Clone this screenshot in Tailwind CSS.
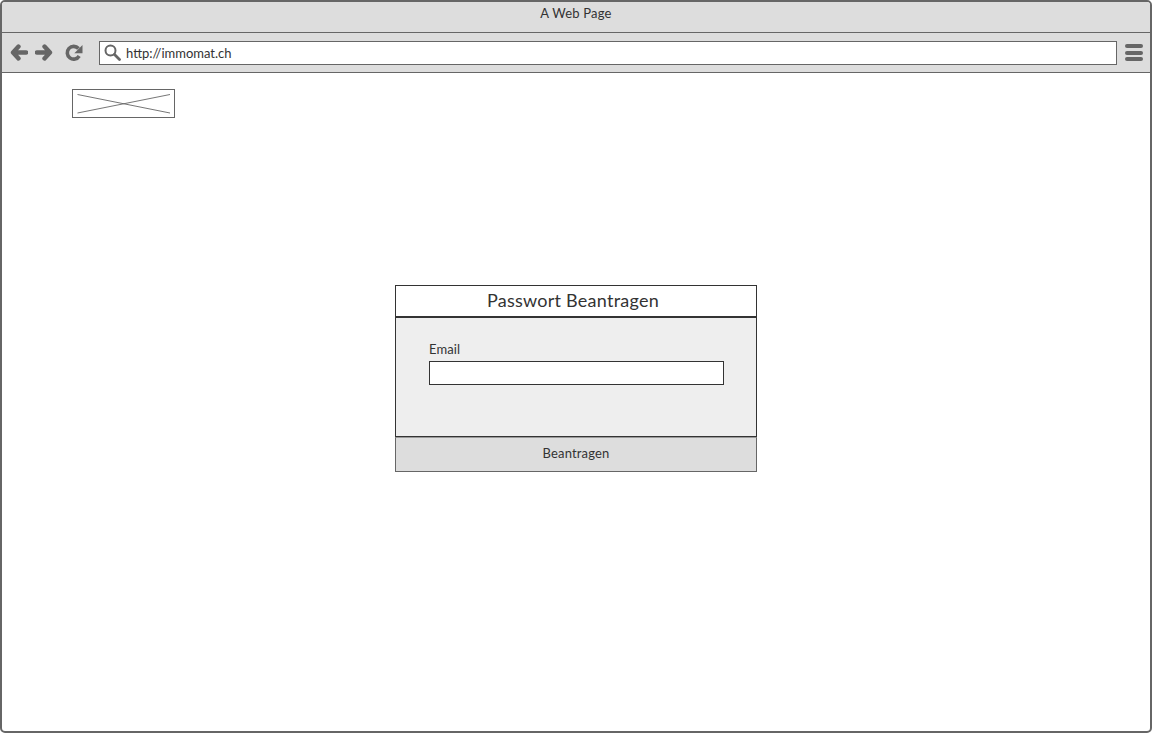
<!doctype html>
<html><head><meta charset="utf-8"><script src="https://cdn.jsdelivr.net/npm/@tailwindcss/browser@4"></script></head>
<body class="bg-white">
<div class="w-[1152px] h-[733px] overflow-hidden bg-white border-2 border-[#666666] rounded-[5px] flex flex-col font-['Lato','Noto_Sans',sans-serif] text-[#333333]">
  <header class="h-[30px] shrink-0 bg-[#dddddd] border-b border-[#666666] -mb-px box-content flex justify-center">
    <span class="text-[13px] leading-[23px] tracking-[0.2px]">A Web Page</span>
  </header>
  <nav class="h-[40px] mt-px shrink-0 bg-[#dddddd] border-b border-[#666666] flex items-center pl-[8px] pr-[7px]">
    <svg class="w-[18px] h-[17px] mr-[7px]" viewBox="0 0 18 17"><path d="M8.5 2.5 L3 8.5 L8.5 14.5 M4 8.5 H16" fill="none" stroke="#666666" stroke-width="4.4" stroke-linecap="round" stroke-linejoin="round"/></svg>
    <svg class="w-[18px] h-[17px] mr-[12px]" viewBox="0 0 18 17"><path d="M9.5 2.5 L15 8.5 L9.5 14.5 M14 8.5 H2" fill="none" stroke="#666666" stroke-width="4.4" stroke-linecap="round" stroke-linejoin="round"/></svg>
    <svg class="w-[18px] h-[18px] mr-[16px]" viewBox="0 0 18 18"><path d="M14.2 12 A6.4 6.4 0 1 1 13.5 4.5" fill="none" stroke="#666666" stroke-width="3.6"/><path d="M17.5 1 V9.2 H9.3 Z" fill="#666666"/></svg>
    <div class="w-[1018px] h-[24px] mt-px bg-white border border-[#666666] flex items-center pl-[4px]">
      <svg class="w-[17px] h-[17px] mr-[5px] -mt-[2px]" viewBox="0 0 17 17"><circle cx="6.5" cy="6.5" r="5" fill="none" stroke="#666666" stroke-width="2"/><path d="M10.5 10.5 L15.5 15.5" stroke="#666666" stroke-width="2.8" stroke-linecap="round"/></svg>
      <span class="text-[13px] leading-[20px]">http://immomat.ch</span>
    </div>
    <div class="ml-[8px] w-[18px] flex flex-col gap-[2.5px]">
      <div class="h-[4px] rounded-full bg-[#666666]"></div>
      <div class="h-[4px] rounded-full bg-[#666666]"></div>
      <div class="h-[4px] rounded-full bg-[#666666]"></div>
    </div>
  </nav>
  <main class="flex-1 flex flex-col">
    <div class="ml-[70px] mt-[16px] w-[103px] h-[29px] border border-[#666666]">
      <svg class="w-full h-full" viewBox="0 0 101 27"><path d="M4.5 4.5 L97 23 M4.5 23 L97 4.5" stroke="#666666" stroke-width="0.9" fill="none"/></svg>
    </div>
    <section class="mt-[167px] ml-[393px] w-[362px] flex flex-col">
      <div class="h-[33px] bg-white border border-b-2 border-[#333333] text-center text-[18px] leading-[28px] tracking-[0.25px] pr-[6px]">Passwort Beantragen</div>
      <div class="h-[119px] bg-[#eeeeee] border-x border-b border-[#333333] pl-[33px] pt-[22px]">
        <label class="block text-[13px] leading-[18px] tracking-[0.1px]">Email</label>
        <div class="w-[295px] h-[24px] mt-[3px] bg-white border border-[#333333]"></div>
      </div>
      <div class="h-[35px] bg-[#dddddd] border-x border-b border-t border-[#666666] border-t-[#999999] text-center text-[13px] leading-[30px] tracking-[0.15px]">Beantragen</div>
    </section>
  </main>
</div>
</body></html>
